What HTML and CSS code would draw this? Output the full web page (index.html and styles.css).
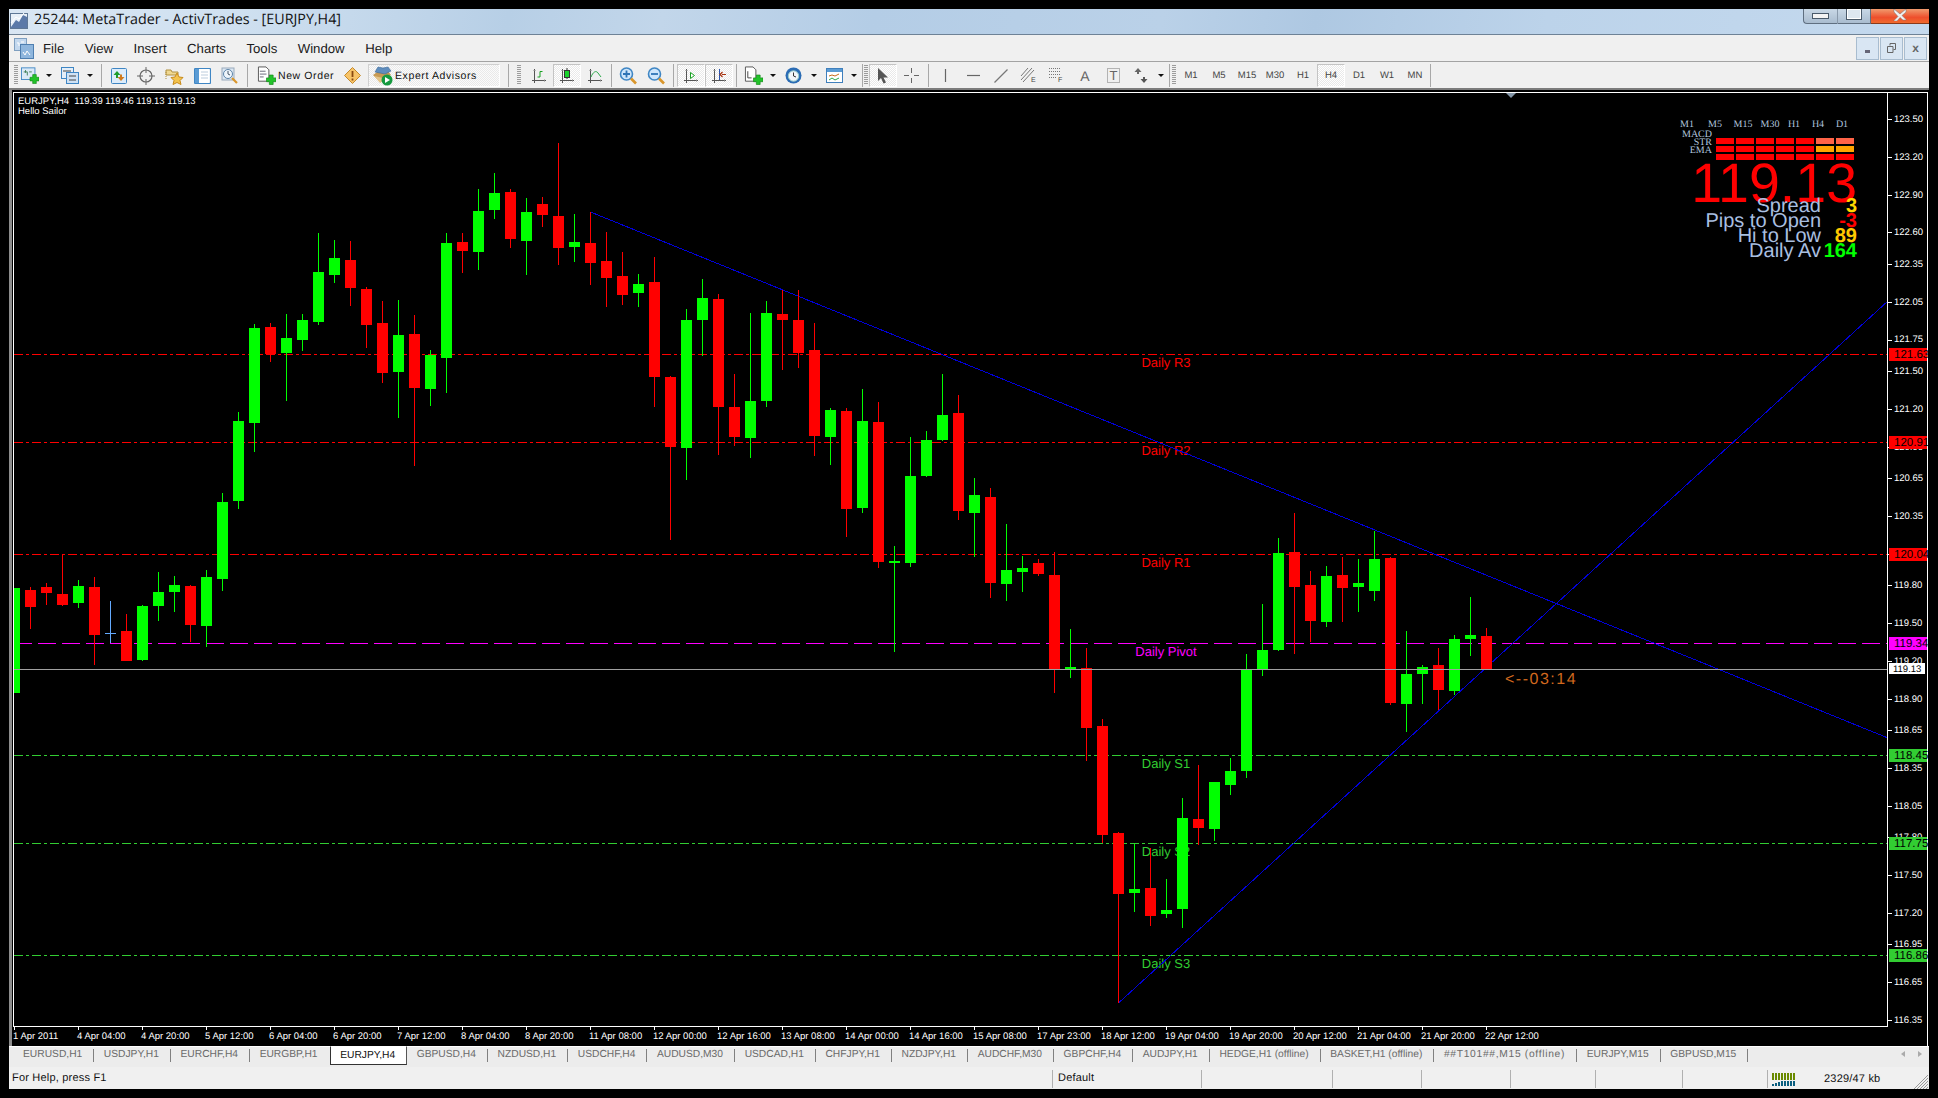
FILE: index.html
```html
<!DOCTYPE html>
<html lang="en">
<head>
<meta charset="utf-8">
<title>25244: MetaTrader - ActivTrades - [EURJPY,H4]</title>
<link rel="stylesheet" href="styles.css">
</head>
<body>
<svg class="defs" width="0" height="0">
  <defs>
    <g id="axes"><path d="M3.5 1v14M1 12.5h14" fill="none" stroke="#555"/><path d="M2.5 2.5h2M13.5 11.5v2" stroke="#888" fill="none"/></g>
    <g id="plus"><path d="M10 10h3V7h4v3h3v4h-3v3h-4v-3h-3z" fill="#22c32a" stroke="#14881a" stroke-width=".7"/></g>
    <g id="lens"><circle cx="7.5" cy="7" r="6" fill="#cfe6fb" stroke="#3f86c4" stroke-width="1.6"/><path d="M12 11.5l5 5" stroke="#d9962c" stroke-width="2.6"/></g>
    <path id="drop" d="M0 0h6L3 3z" fill="#111"/>
  </defs>
</svg>
<div class="window">
  <header class="titlebar">
    <svg class="title-icon" width="18" height="18" viewBox="0 0 18 18"><rect x=".5" y="2.5" width="17" height="15" fill="#e8f0f8" stroke="#5f7896"/><path d="M1 16l5-7 3 2 4-7 4 2v11H1z" fill="#5b79a8"/><path d="M1 12l5-6 3 2 5-6" fill="none" stroke="#fff"/></svg>
    <span class="title-text">25244: MetaTrader - ActivTrades - [EURJPY,H4]</span>
    <div class="wincontrols">
      <span class="wc wc-min"><i class="glyph-min"></i></span>
      <span class="wc wc-max"><i class="glyph-max"></i></span>
      <span class="wc wc-close"><svg width="16" height="12" viewBox="0 0 16 12"><path d="M2 0l6 5 6-5v3l-4 3.500 4 4v.500h-3L8 8.500 5 12H2v-.500l4-4L2 3z" fill="#f2f2f2" stroke="#777" stroke-width=".5"/></svg></span>
    </div>
  </header>

  <nav class="menubar">
    <svg class="mdi-icon" width="20" height="21" viewBox="0 0 20 21"><rect x=".5" y=".5" width="12" height="12" fill="#c3d8ee" stroke="#7f9fc0"/><rect x="6.500" y="6.500" width="13" height="14" fill="#8fb6dd" stroke="#4f7fb0"/><path d="M3 5h2v3M7 4h3M9 14l2 3 2-4 3 4" fill="none" stroke="#fff"/></svg>
    <span class="menu-item">File</span>
    <span class="menu-item">View</span>
    <span class="menu-item">Insert</span>
    <span class="menu-item">Charts</span>
    <span class="menu-item">Tools</span>
    <span class="menu-item">Window</span>
    <span class="menu-item">Help</span>
    <div class="mdi-controls">
      <span class="mdi-btn"><i class="mdi-min"></i></span>
      <span class="mdi-btn"><svg width="9" height="10" viewBox="0 0 9 10"><path d="M3 2.500V.500h5.500v6H6.500M.5 3.500h5.500v6H.5z" fill="none" stroke="#666"/></svg></span>
      <span class="mdi-btn mdi-x">x</span>
    </div>
  </nav>

  <div class="toolbar">
    <i class="grip"></i>
    <span class="tool w24"><svg width="18" height="17" viewBox="0 0 20 18"><rect x=".5" y=".5" width="15" height="13" fill="#dbe9f7" stroke="#3f86c4"/><path d="M3 5h4v4M5 3v3M9 5h3" stroke="#3b7a54" fill="none"/><use href="#plus" transform="translate(0 1)"/></svg></span>
    <span class="drop w14"><svg width="6" height="3" viewBox="0 0 6 3"><use href="#drop"/></svg></span>
    <span class="tool"><svg width="18" height="17" viewBox="0 0 18 17"><rect x=".5" y=".5" width="12" height="11" fill="#e4eef8" stroke="#3f86c4"/><rect x="5.500" y="5.500" width="12" height="11" fill="#cfe2f5" stroke="#3f86c4"/><path d="M2 4h8M8 9h7M8 13h7" stroke="#444"/></svg></span>
    <span class="drop w12"><svg width="6" height="3" viewBox="0 0 6 3"><use href="#drop"/></svg></span>
    <i class="sep w10"></i>
    <span class="tool w26"><svg width="16" height="16" viewBox="0 0 16 16"><rect x=".5" y=".5" width="15" height="15" rx="1" fill="#dcecfb" stroke="#3f86c4"/><path d="M6 3L2.500 7H5v3h2V7h2.500z" fill="#1f9d2c"/><path d="M10 13l3.500-4H11V6.500H9V9H6.500z" fill="#d07a1c"/></svg></span>
    <span class="tool"><svg width="18" height="18" viewBox="0 0 18 18"><circle cx="9" cy="9" r="6" fill="none" stroke="#666" stroke-width="1.200"/><path d="M9 0v6M9 12v6M0 9h6M12 9h6" stroke="#666"/></svg></span>
    <span class="tool"><svg width="19" height="18" viewBox="0 0 19 18"><path d="M1 3h5l1 2h6v3H1z" fill="#f0d890" stroke="#b09040"/><path d="M1 5v8" stroke="#b09040" stroke-dasharray="1 1"/><path d="M12 6l2 4 4 .5-3 3 1 4-4-2-4 2 1-4-3-3 4-.5z" fill="#f3c34d" stroke="#c88a1a"/></svg></span>
    <span class="tool"><svg width="17" height="16" viewBox="0 0 17 16"><rect x=".5" y=".5" width="16" height="15" rx="1" fill="#fff" stroke="#3f86c4" stroke-width="1.200"/><rect x="1" y="1" width="4" height="14" fill="#5a9bd4"/><path d="M7 4h7M7 7h7M7 10h7" stroke="#bcd"/></svg></span>
    <span class="tool"><svg width="18" height="18" viewBox="0 0 18 18"><rect x="1" y="1" width="12" height="12" fill="#dbe7f3" stroke="#9ab"/><circle cx="7" cy="7" r="4.500" fill="#eef5fb" stroke="#5c84a8"/><path d="M7 4v3l2 1" stroke="#456" fill="none"/><path d="M11 11l5 5" stroke="#d9962c" stroke-width="2.200"/></svg></span>
    <i class="sep w6"></i>
    <span class="tool-new">
      <svg width="19" height="19" viewBox="0 0 20 19"><path d="M1.500 .5h8l3 3v12h-11z" fill="#fff" stroke="#555"/><path d="M3 5h6M3 8h7M3 11h4" stroke="#667"/><use href="#plus" transform="translate(0 2)"/></svg>
      <span class="tool-label">New Order</span>
    </span>
    <span class="tool w24"><svg width="17" height="17" viewBox="0 0 17 17"><path d="M8.500 .5l8 8-8 8-8-8z" fill="#f7c368" stroke="#c48a2c"/><path d="M8.500 4v6M8.500 11.500v2" stroke="#8a4a10" stroke-width="1.800"/></svg></span>
    <span class="ea-btn">
      <svg width="21" height="21" viewBox="0 0 21 21"><path d="M1 10l7-5 8 1 3 4-6 3-8 1z" fill="#c79a54"/><path d="M3 7l3-5 5 1 5-1 3 4-6 3z" fill="#5f8dbd" stroke="#3d6a98" stroke-width=".6"/><path d="M2 11l6 7 5-3 5-5-7 3z" fill="#e3c489"/><circle cx="15" cy="15" r="5.500" fill="#159a3f"/><path d="M13 12l5 3-5 3z" fill="#fff"/></svg>
      <span class="tool-label">Expert Advisors</span>
    </span>
    <i class="sep w15"></i>
    <i class="grip"></i>
    <span class="tool ml5"><svg width="16" height="16" viewBox="0 0 16 16"><use href="#axes"/><path d="M6.500 9h2.500V3.500h2.500" fill="none" stroke="#18a022"/></svg></span>
    <span class="tool on"><svg width="16" height="16" viewBox="0 0 16 16"><use href="#axes"/><path d="M8 0v11" stroke="#333"/><rect x="5.500" y="2.500" width="5" height="7" fill="#19d32b" stroke="#333"/></svg></span>
    <span class="tool"><svg width="16" height="16" viewBox="0 0 16 16"><use href="#axes"/><path d="M4 9c2-5 5-7 7-4l3 4" fill="none" stroke="#2ca84a"/></svg></span>
    <i class="sep w5"></i>
    <span class="tool"><svg width="18" height="18" viewBox="0 0 18 18"><use href="#lens"/><path d="M4 7h7M7.500 3.500v7" stroke="#2f74b6" stroke-width="1.800"/></svg></span>
    <span class="tool"><svg width="18" height="18" viewBox="0 0 18 18"><use href="#lens"/><path d="M4 7h7" stroke="#2f74b6" stroke-width="1.800"/></svg></span>
    <i class="sep w7"></i>
    <span class="tool on"><svg width="16" height="16" viewBox="0 0 16 16"><use href="#axes"/><path d="M7.500 4.500l4 3-4 3z" fill="#fff" stroke="#18a022"/></svg></span>
    <span class="tool on"><svg width="16" height="16" viewBox="0 0 16 16"><use href="#axes"/><path d="M8.500 1v11" stroke="#2a55b0"/><path d="M15 6.500h-4M11.500 4l-2.500 2.500 2.500 2.500" fill="none" stroke="#a8320f" stroke-width="1.200"/></svg></span>
    <i class="sep w6"></i>
    <span class="tool"><svg width="19" height="19" viewBox="0 0 20 19"><path d="M1.500 .5h8l3 3v12h-11z" fill="#fff" stroke="#555"/><path d="M4 5v7h4" fill="none" stroke="#444"/><use href="#plus" transform="translate(0 2)"/></svg></span>
    <span class="drop w12"><svg width="6" height="3" viewBox="0 0 6 3"><use href="#drop"/></svg></span>
    <span class="tool"><svg width="17" height="17" viewBox="0 0 17 17"><circle cx="8.500" cy="8.500" r="8" fill="#2b6cb4"/><circle cx="8.500" cy="9" r="5.200" fill="#f2f6fa" stroke="#9cc"/><path d="M8.500 5.500V9l2.500 1" fill="none" stroke="#333"/></svg></span>
    <span class="drop w13"><svg width="6" height="3" viewBox="0 0 6 3"><use href="#drop"/></svg></span>
    <span class="tool"><svg width="17" height="15" viewBox="0 0 17 15"><rect x=".5" y=".5" width="16" height="14" fill="#fff" stroke="#3f7fbc"/><rect x="1" y="1" width="15" height="3" fill="#5a9bd4"/><path d="M3 8l3-1 3 1 4-2" fill="none" stroke="#c86a1a"/><path d="M3 12l3-2 3 2 4-2" fill="none" stroke="#2ca84a"/></svg></span>
    <span class="drop w12"><svg width="6" height="3" viewBox="0 0 6 3"><use href="#drop"/></svg></span>
    <i class="sep w4"></i>
    <i class="grip"></i>
    <span class="tool on ml1"><svg width="14" height="16" viewBox="0 0 14 16"><path d="M2 0v13l3-3 2.500 5.500 2.500-1-2.500-5H12z" fill="#555"/></svg></span>
    <span class="tool"><svg width="15" height="15" viewBox="0 0 15 15"><path d="M7.500 0v5M7.500 10v5M0 7.500h5M10 7.500h5" stroke="#666"/></svg></span>
    <i class="sep w6"></i>
    <span class="tool"><svg width="3" height="13" viewBox="0 0 3 13"><path d="M1.500 0v13" stroke="#666" stroke-width="1.200"/></svg></span>
    <span class="tool"><svg width="13" height="3" viewBox="0 0 13 3"><path d="M0 1.500h13" stroke="#666" stroke-width="1.200"/></svg></span>
    <span class="tool"><svg width="14" height="14" viewBox="0 0 14 14"><path d="M.5 13.500l13-13" stroke="#777" stroke-width="1.200"/></svg></span>
    <span class="tool"><svg width="18" height="18" viewBox="0 0 18 18"><path d="M1 13L12 1M3 15L14 3M1 9L8 1" stroke="#777" fill="none"/><text class="tool-glyph-s" x="11" y="15">E</text></svg></span>
    <span class="tool"><svg width="17" height="18" viewBox="0 0 17 18"><path d="M0 1.500h11M0 4.500h11M0 7.500h11M0 10.500h7" stroke="#777" stroke-dasharray="1 1"/><text class="tool-glyph-s" x="9" y="15">F</text></svg></span>
    <span class="tool tool-a">A</span>
    <span class="tool"><svg width="13" height="15" viewBox="0 0 13 15"><rect x=".5" y=".5" width="12" height="14" fill="none" stroke="#777" stroke-dasharray="1 1"/><text class="tool-glyph" x="6.500" y="12" text-anchor="middle">T</text></svg></span>
    <span class="tool"><svg width="15" height="16" viewBox="0 0 15 16"><path d="M4 0l3.500 4H5v2H3V4H.5z" fill="#666"/><path d="M10 15l-3.500-4H9V9h2v2h2.500z" fill="#555"/></svg></span>
    <span class="drop w11"><svg width="6" height="3" viewBox="0 0 6 3"><use href="#drop"/></svg></span>
    <i class="sep w6"></i>
    <i class="grip"></i>
    <span class="tool tf ml1">M1</span>
    <span class="tool tf">M5</span>
    <span class="tool tf">M15</span>
    <span class="tool tf">M30</span>
    <span class="tool tf">H1</span>
    <span class="tool tf on">H4</span>
    <span class="tool tf">D1</span>
    <span class="tool tf">W1</span>
    <span class="tool tf">MN</span>
    <i class="sep w2"></i>
  </div>

  <main class="chart-row">
    <i class="chart-edge"></i>
    <svg class="chart" width="1915" height="954" viewBox="13 92 1915 954">
      <defs><clipPath id="plot"><rect x="14" y="93" width="1873" height="933"/></clipPath></defs>

      <g class="levels">
        <path class="lv-red" d="M14 354.500H1888M14 442.500H1888M14 554.500H1888"/>
        <path class="lv-pivot" d="M14 643.500H1888"/>
        <path class="lv-green" d="M14 755.500H1888M14 843.500H1888M14 955.500H1888"/>
      </g>
      <g class="level-labels">
        <text class="t-red" x="1166" y="367">Daily R3</text>
        <text class="t-red" x="1166" y="455">Daily R2</text>
        <text class="t-red" x="1166" y="567">Daily R1</text>
        <text class="t-pivot" x="1166" y="656">Daily Pivot</text>
        <text class="t-green" x="1166" y="768">Daily S1</text>
        <text class="t-green" x="1166" y="856">Daily S2</text>
        <text class="t-green" x="1166" y="968">Daily S3</text>
      </g>
      <path class="trend" d="M590.500 212L1888 738M1118.500 1003L1888 301"/>
      <g id="candles" clip-path="url(#plot)"></g>
      <path class="bid" d="M14 669.500H1888"/>
      <text class="countdown" x="1505" y="684">&lt;--03:14</text>

      <polygon class="shift-mark" points="1506,93 1516,93 1511,98"/>

      <g class="info">
        <text x="18" y="104" class="info-t">EURJPY,H4  119.39 119.46 119.13 119.13</text>
        <text x="18" y="114" class="info-t">Hello Sailor</text>
      </g>

      <g class="panel-heads">
        <text class="mtf" x="1687" y="127">M1</text>
        <text class="mtf" x="1715" y="127">M5</text>
        <text class="mtf" x="1743" y="127">M15</text>
        <text class="mtf" x="1770" y="127">M30</text>
        <text class="mtf" x="1794" y="127">H1</text>
        <text class="mtf" x="1818" y="127">H4</text>
        <text class="mtf" x="1842" y="127">D1</text>
        <text class="mtf-r" x="1712" y="137">MACD</text>
        <text class="mtf-r" x="1712" y="145">STR</text>
        <text class="mtf-r" x="1712" y="153">EMA</text>
      </g>
      <g id="signal-grid"></g>
      <text class="bigprice" x="1857" y="202">119.13</text>
      <g class="stats">
        <text class="st" x="1821" y="212">Spread</text>
        <text class="st" x="1821" y="227">Pips to Open</text>
        <text class="st" x="1821" y="242">Hi to Low</text>
        <text class="st" x="1821" y="257">Daily Av</text>
        <text class="sv sv-y" x="1857" y="212">3</text>
        <text class="sv sv-r" x="1857" y="227">-3</text>
        <text class="sv sv-o" x="1857" y="242">89</text>
        <text class="sv sv-g" x="1857" y="257">164</text>
      </g>

      <rect class="frame" x="13.500" y="92.500" width="1874" height="934"/>
      <path class="frame" d="M1927.500 92V1046"/>
      <path class="frame" d="M1888 92.500h40"/>
      <path class="frame" d="M1892 119h-4M1892 157h-4M1892 195h-4M1892 232h-4M1892 264h-4M1892 302h-4M1892 340h-4M1892 371h-4M1892 409h-4M1892 447h-4M1892 478h-4M1892 516h-4M1892 554h-4M1892 585h-4M1892 623h-4M1892 661h-4M1892 699h-4M1892 730h-4M1892 768h-4M1892 806h-4M1892 837h-4M1892 875h-4M1892 913h-4M1892 944h-4M1892 982h-4M1892 1020h-4"/>
      <g class="axis-y">
        <text x="1894" y="122">123.50</text><text x="1894" y="160">123.20</text><text x="1894" y="198">122.90</text><text x="1894" y="235">122.60</text><text x="1894" y="267">122.35</text><text x="1894" y="305">122.05</text><text x="1894" y="342">121.75</text><text x="1894" y="374">121.50</text><text x="1894" y="412">121.20</text><text x="1894" y="450">120.90</text><text x="1894" y="481">120.65</text><text x="1894" y="519">120.35</text><text x="1894" y="557">120.05</text><text x="1894" y="588">119.80</text><text x="1894" y="626">119.50</text><text x="1894" y="664">119.20</text><text x="1894" y="702">118.90</text><text x="1894" y="733">118.65</text><text x="1894" y="771">118.35</text><text x="1894" y="809">118.05</text><text x="1894" y="840">117.80</text><text x="1894" y="878">117.50</text><text x="1894" y="916">117.20</text><text x="1894" y="947">116.95</text><text x="1894" y="985">116.65</text><text x="1894" y="1023">116.35</text>
      </g>
      <g class="flags">
        <rect class="f-red" x="1889" y="348" width="38" height="13"/><text x="1894" y="358">121.63</text>
        <rect class="f-red" x="1889" y="436" width="38" height="13"/><text x="1894" y="446">120.91</text>
        <rect class="f-red" x="1889" y="548" width="38" height="13"/><text x="1894" y="558">120.04</text>
        <rect class="f-mag" x="1889" y="637" width="38" height="13"/><text x="1894" y="647">119.34</text>
        <rect class="f-green" x="1889" y="749" width="38" height="13"/><text x="1894" y="759">118.45</text>
        <rect class="f-green" x="1889" y="837" width="38" height="13"/><text x="1894" y="847">117.75</text>
        <rect class="f-green" x="1889" y="949" width="38" height="13"/><text x="1894" y="959">116.86</text>
      </g>
      <rect class="f-white" x="1889" y="663" width="36" height="11"/>
      <text class="bidflag" x="1893" y="672">119.13</text>

      <path class="frame" d="M14 1026v4M78 1026v4M142 1026v4M206 1026v4M270 1026v4M334 1026v4M398 1026v4M462 1026v4M526 1026v4M590 1026v4M654 1026v4M718 1026v4M782 1026v4M846 1026v4M910 1026v4M974 1026v4M1038 1026v4M1102 1026v4M1166 1026v4M1230 1026v4M1294 1026v4M1358 1026v4M1422 1026v4M1486 1026v4"/>
      <g class="axis-x">
        <text x="13" y="1039">1 Apr 2011</text><text x="77" y="1039">4 Apr 04:00</text><text x="141" y="1039">4 Apr 20:00</text><text x="205" y="1039">5 Apr 12:00</text><text x="269" y="1039">6 Apr 04:00</text><text x="333" y="1039">6 Apr 20:00</text><text x="397" y="1039">7 Apr 12:00</text><text x="461" y="1039">8 Apr 04:00</text><text x="525" y="1039">8 Apr 20:00</text><text x="589" y="1039">11 Apr 08:00</text><text x="653" y="1039">12 Apr 00:00</text><text x="717" y="1039">12 Apr 16:00</text><text x="781" y="1039">13 Apr 08:00</text><text x="845" y="1039">14 Apr 00:00</text><text x="909" y="1039">14 Apr 16:00</text><text x="973" y="1039">15 Apr 08:00</text><text x="1037" y="1039">17 Apr 23:00</text><text x="1101" y="1039">18 Apr 12:00</text><text x="1165" y="1039">19 Apr 04:00</text><text x="1229" y="1039">19 Apr 20:00</text><text x="1293" y="1039">20 Apr 12:00</text><text x="1357" y="1039">21 Apr 04:00</text><text x="1421" y="1039">21 Apr 20:00</text><text x="1485" y="1039">22 Apr 12:00</text>
      </g>
    </svg>
  </main>

  <div class="tabbar">
    <span class="tab">EURUSD,H1</span>
    <span class="tab">USDJPY,H1</span>
    <span class="tab">EURCHF,H4</span>
    <span class="tab nosep">EURGBP,H1</span>
    <span class="tab active">EURJPY,H4</span>
    <span class="tab">GBPUSD,H4</span>
    <span class="tab">NZDUSD,H1</span>
    <span class="tab">USDCHF,H4</span>
    <span class="tab">AUDUSD,M30</span>
    <span class="tab">USDCAD,H1</span>
    <span class="tab">CHFJPY,H1</span>
    <span class="tab">NZDJPY,H1</span>
    <span class="tab">AUDCHF,M30</span>
    <span class="tab">GBPCHF,H4</span>
    <span class="tab">AUDJPY,H1</span>
    <span class="tab">HEDGE,H1 (offline)</span>
    <span class="tab">BASKET,H1 (offline)</span>
    <span class="tab tab-wide">##T101##,M15 (offline)</span>
    <span class="tab">EURJPY,M15</span>
    <span class="tab">GBPUSD,M15</span>
    <div class="tab-scroll">
      <svg width="4" height="6" viewBox="0 0 4 6"><path d="M4 0v6L0 3z" fill="#aaa"/></svg>
      <svg width="4" height="6" viewBox="0 0 4 6"><path d="M0 0v6l4-3z" fill="#aaa"/></svg>
    </div>
  </div>

  <footer class="statusbar">
    <span class="cell">For Help, press F1</span>
    <span class="cell">Default</span>
    <span class="cell"></span>
    <span class="cell"></span>
    <span class="cell"></span>
    <span class="cell"></span>
    <span class="cell"></span>
    <span class="cell"></span>
    <span class="cell cell-last">
      <svg class="conn" width="24" height="13" viewBox="0 0 24 13"><path d="M1 0v7M4 0v7M7 0v7M10 0v7M13 0v7M16 0v7M19 0v7M22 0v7" stroke="#6a8a00" stroke-width="2"/><path d="M1 11v2M4 10v3M7 9v4M10 8v5M13 8v5M16 8v5M19 8v5M22 8v5" stroke="#0b5f80" stroke-width="2"/></svg>
      <span class="kb">2329/47 kb</span>
      <svg class="resize" width="14" height="14" viewBox="0 0 14 14"><path d="M14 0L0 14M14 3L3 14M14 6L6 14M14 9L9 14M14 12l-2 2" stroke="#999"/></svg>
    </span>
  </footer>
</div>
<script src="chart.js"></script>
</body>
</html>
```

FILE: styles.css
```css
* { box-sizing: border-box; }
html, body { margin: 0; padding: 0; background: #000; }
body { width: 1938px; height: 1098px; overflow: hidden; font-family: "Liberation Sans", Arial, sans-serif; text-rendering: geometricPrecision; }
.defs { position: absolute; }
i { display: block; }

.window { margin: 9px 0 0 9px; width: 1920px; height: 1080px; display: flex; flex-direction: column; }

/* title bar */
.titlebar { height: 25px; display: flex; align-items: center; padding-left: 1px; overflow: hidden;
  background: linear-gradient(100deg, #d9e6f3 0, #cfe0f0 12%, #b7cfe6 26%, #c2d6ea 34%, #b4cde6 45%, #bad1e8 60%, #aec8e2 68%, #bcd3ea 80%, #c4d9ee 100%); }
.title-icon { margin: 0 6px 3px 0; flex: none; }
.title-text { margin-bottom: 4px; font-family: "Open Sans", "Liberation Sans", sans-serif; font-size: 14.300px; color: #111; white-space: nowrap; }
.wincontrols { margin-left: auto; align-self: flex-start; display: flex; height: 15px; }
.wc { display: flex; justify-content: center; border: 1px solid #5f6f80; border-top: none; height: 15px; }
.wc-min { width: 35px; align-items: flex-end; padding-bottom: 4px; border-right: 1px solid #8a9aab; border-radius: 0 0 0 4px; background: linear-gradient(#c9d8e6, #a9bccf); }
.wc-max { width: 33px; background: linear-gradient(#c9d8e6, #a9bccf); border-left: none; }
.wc-close { width: 58px; background: linear-gradient(#f19b6e, #ee4f2c 60%, #f06a2e); border: none; border-bottom: 1px solid #8a3a1a; }
.glyph-min { width: 17px; height: 6px; background: #f4f4f4; border: 1px solid #4a5a6a; }
.glyph-max { width: 16px; height: 11px; border: 1px solid #4a5a6a; border-top: none; background: #dde7f0; box-shadow: inset 0 0 0 1px #fff; }

/* menu */
.menubar { height: 28px; display: flex; align-items: center; gap: 20.500px; padding: 0 2px 0 5px; background: #f0f0f0; border-top: 1px solid #6e8296; border-bottom: 1px solid #a3a3a3; }
.mdi-icon { margin-right: -11.500px; flex: none; }
.menu-item { font-size: 13.200px; color: #1a1a1a; margin-top: 1px; }
.mdi-controls { margin-left: auto; display: flex; gap: 1px; }
.mdi-btn { width: 23px; height: 23px; display: flex; align-items: center; justify-content: center; background: #d9e6f3; border: 1px solid #a8bccf; color: #666; font-size: 12px; font-weight: bold; }
.mdi-min { width: 5px; height: 3px; background: #667; margin-top: 6px; }

/* toolbar */
.toolbar { height: 28px; display: flex; align-items: flex-start; padding: 2px 0 0 5px; background: #f0f0f0; border-bottom: 2px solid #7c7c7c; }
.grip { width: 4px; height: 20px; margin-top: 1px; flex: none; background: repeating-linear-gradient(#9c9c9c 0 1px, #f0f0f0 1px 2px); }
.tool { width: 28px; height: 23px; flex: none; display: flex; align-items: center; justify-content: center; }
.tool.on { background: repeating-conic-gradient(#fff 0 25%, #e9e9e9 0 50%) 0 0 / 2px 2px; border: 1px solid #fff; border-top-color: #c4c4c4; border-left-color: #c4c4c4; }
.w24 { width: 24px; }
.w26 { width: 26px; }
.drop { height: 23px; flex: none; display: flex; align-items: center; justify-content: center; }
.w11 { width: 11px; }
.w12 { width: 12px; }
.w13 { width: 13px; }
.w14 { width: 14px; }
.sep { flex: none; height: 23px; background: linear-gradient(#a8a8a8, #a8a8a8) center / 1px 100% no-repeat; }
.w2 { width: 2px; }
.w4 { width: 4px; }
.w5 { width: 5px; }
.w6 { width: 6px; }
.w7 { width: 7px; }
.w10 { width: 10px; }
.w15 { width: 17px; }
.ml1 { margin-left: 1px; }
.ml5 { margin-left: 4px; }
.tool-new { width: 90px; height: 23px; flex: none; display: flex; align-items: center; gap: 2px; padding-left: 7px; }
.tool-label { font-size: 10.500px; letter-spacing: .6px; color: #111; white-space: nowrap; }
.ea-btn { width: 132px; height: 23px; margin-left: 4px; flex: none; display: flex; align-items: center; gap: 2px; padding-left: 3px; border: 1px solid #d0d0d0; border-right-color: #fff; border-bottom-color: #fff; background: repeating-conic-gradient(#fbfbfb 0 25%, #e9e9e9 0 50%) 0 0 / 2px 2px; }
.tool-a { font-size: 14px; color: #666; }
.tf { font-size: 9.500px; color: #444; }
.tool-glyph { font: 13px "Liberation Sans", sans-serif; fill: #666; }
.tool-glyph-s { font: 7px "Liberation Sans", sans-serif; fill: #444; }

/* chart */
.chart-row { height: 956px; display: flex; background: #000; }
.chart-edge { width: 3px; background: #8c8c8c; margin-right: 1px; }
.chart { display: block; flex: none; margin-top: 2px; background: #000; }
.chart text { font-family: "Liberation Sans", Arial, sans-serif; white-space: pre; }
.lv-red, .lv-green, .lv-pivot, .bid, .trend, .frame, .chart rect { shape-rendering: crispEdges; }
.lv-red { fill: none; stroke: #ff0000; stroke-dasharray: 9 3 3 3; }
.lv-green { fill: none; stroke: #32cd32; stroke-dasharray: 9 3 3 3; }
.lv-pivot { fill: none; stroke: #ff00ff; stroke-dasharray: 18 6; }
.bid { fill: none; stroke: #a0a0a0; }
.trend { fill: none; stroke: #0000d8; }
.frame { fill: none; stroke: #fff; }
.level-labels text { font-size: 13px; text-anchor: middle; }
.t-red { fill: #ff0000; }
.t-pivot { fill: #ff00ff; }
.t-green { fill: #32cd32; }
.bull { fill: #00ff00; }
.bear { fill: #ff0000; }
.doji { fill: #64aaff; }
.countdown { font-size: 16px; letter-spacing: 1.500px; fill: #d2691e; }
.shift-mark { fill: #8496a8; }
.info-t { font-size: 9.500px; fill: #fff; }
.chart .mtf, .chart .mtf-r { font-family: "Liberation Serif", "Times New Roman", serif; font-size: 10px; fill: #b0c4de; }
.mtf { text-anchor: middle; }
.mtf-r { text-anchor: end; }
.sig-red { fill: #ff0000; }
.sig-tomato { fill: #ff6347; }
.sig-orange { fill: #ffa500; }
.bigprice { font-size: 55.500px; fill: #ff0000; text-anchor: end; }
.st { font-size: 20px; fill: #a9bfe0; text-anchor: end; }
.sv { font-size: 20px; font-weight: bold; text-anchor: end; }
.sv-y { fill: #ffd700; }
.sv-r { fill: #ff0000; }
.sv-o { fill: #ffc800; }
.sv-g { fill: #00ff00; }
.axis-y text, .axis-x text { font-size: 9.500px; fill: #fff; }
.flags text { font-size: 11.500px; fill: #000; }
.f-red { fill: #ff0000; }
.f-mag { fill: #ff00ff; }
.f-green { fill: #32cd32; }
.f-white { fill: #fff; }
.bidflag { font-size: 9.500px; fill: #000; }

/* tabs */
.tabbar { height: 21px; display: flex; align-items: flex-start; padding-left: 4.500px; background: #ececec; border-top: 1px solid #fff; }
.tab { flex: none; height: 13px; margin-top: 2px; padding: 0 11.100px 0 9.500px; border-right: 1px solid #808080; font-size: 10.250px; line-height: 12px; color: #6a6a6a; white-space: nowrap; }
.tab.nosep { border-right-color: transparent; }
.tab.active { height: 19px; margin-top: -1px; padding: 2px 11px 0 9.500px; line-height: 13px; background: #fff; color: #111; border: 1px solid #333; border-top-color: #fff; border-right-color: #555; }
.tab.tab-wide { letter-spacing: .7px; }
.tab-scroll { margin: 4px 7px 0 auto; display: flex; gap: 13px; }

/* status */
.statusbar { height: 22px; display: grid; grid-template-columns: 1044px 149px 131px 89px 89px 85px 87px 85px 1fr; align-items: center; background: #f0f0f0; }
.cell { height: 18px; padding-left: 3px; margin-top: 2px; font-size: 11px; line-height: 17px; letter-spacing: .2px; color: #111; border-right: 1px solid #b0b0b0; white-space: nowrap; }
.statusbar .cell:nth-child(2) { padding-left: 5px; }
.cell-last { display: flex; align-items: center; border-right: none; padding-left: 4px; position: relative; }
.kb { margin-left: 28px; }
.resize { position: absolute; right: 1px; bottom: -1px; }
```

FILE: chart.js
```js
// Candles measured as [high, bodyTop, bodyBottom, low] on three stretches of the chart.
var NS = "http://www.w3.org/2000/svg";
var segments = [
  { from: 1, y0: 120, k: 2.8, d: [
    "r1308 1316 1364 1425","r1296 1308 1324 1357","r1216 1327 1358 1362","g1288 1305 1352 1366","r1280 1308 1442 1526",
    "d1347 1437 1438 1465","r1383 1431 1515 1515","g1358 1361 1512 1515","g1266 1322 1361 1403","g1277 1302 1322 1378",
    "r1302 1305 1414 1462","g1260 1280 1417 1476","g1044 1070 1285 1319","g818 843 1067 1089","g571 582 848 930",
    "r568 580 656 678","g543 610 652 787","g543 560 616 647","g316 426 566 574","g336 386 434 456",
    "r339 392 470 521","r468 473 574 638","r507 568 708 736","g504 602 706 834","r546 599 750 969",
    "g644 658 753 801","g316 344 666 764","r316 342 367 428","g193 255 370 420","g148 204 252 277",
    "r193 202 333 358","g218 258 339 434","r216 235 266 300","r64 269 358 406","g263 342 356 398",
    "r258 344 400 462","r314 395 442 524","r370 437 490 518","g431 459 484 524"] },
  { from: 40, y0: 250, k: 3, d: [
    "r22 96 381 471","r378 381 591 870","g177 210 594 690","g87 144 210 318","r132 147 471 615",
    "r372 471 561 588","g189 453 564 624","g153 189 453 471","r120 192 210 360","r120 210 309 354",
    "r219 300 558 618","g474 480 561 645","r474 483 777 861","g417 513 774 789","r456 516 936 954",
    "g888 933 939 1206","g561 678 939 951","g543 570 678 681","g372 495 570 573","r435 489 783 810",
    "g684 735 789 921","r714 741 999 1044","g822 960 1002 1053","g918 954 966 1026","r927 939 972 978",
    "r906 975 1260 1329","g1137 1251 1258 1284"] },
  { from: 67, y0: 500, k: 3, d: [
    "r444 504 684 783","r657 678 1005 1030","r996 999 1182 1510","g1032 1167 1179 1236","r1044 1164 1248 1278",
    "g1137 1230 1242 1254","g894 954 1227 1284","r795 957 984 1035","g846 846 987 1023","g774 813 855 885",
    "g462 509 813 834","g312 450 509 528","g114 159 450 453","r39 156 261 462","r213 255 363 426",
    "g198 228 366 381","r171 225 264 366","g177 249 261 336","g93 177 273 303","r171 174 609 615",
    "g393 522 612 696","g495 501 522 612","r444 495 570 630","g405 417 573 585","g291 405 417 468",
    "r384 408 509 510"] }
];
var candles = document.getElementById("candles");
function box(parent, cls, x, y, w, h) {
  var r = document.createElementNS(NS, "rect");
  r.setAttribute("class", cls);
  r.setAttribute("x", x);
  r.setAttribute("y", y);
  r.setAttribute("width", w);
  r.setAttribute("height", h);
  parent.appendChild(r);
}
var names = { r: "bear", g: "bull", d: "doji" };
box(candles, "bull", 9, 588, 11, 105);
segments.forEach(function (s) {
  s.d.forEach(function (row, n) {
    var cls = names[row.charAt(0)];
    var v = row.slice(1).split(" ").map(function (z) { return Math.round(s.y0 + Number(z) / s.k); });
    var cx = 14 + 16 * (s.from + n);
    box(candles, cls, cx, v[0], 1, Math.max(1, v[3] - v[0]));
    box(candles, cls, cx - 5, v[1], 11, Math.max(1, v[2] - v[1]));
  });
});
var grid = document.getElementById("signal-grid");
for (var c = 0; c < 7; c++) {
  for (var r = 0; r < 3; r++) {
    var cls = "sig-red";
    if (c > 4 && r === 0) cls = "sig-tomato";
    if (c > 4 && r === 1) cls = "sig-orange";
    box(grid, cls, 1716 + 20 * c, 138 + 8 * r, 18, 6);
  }
}
```
